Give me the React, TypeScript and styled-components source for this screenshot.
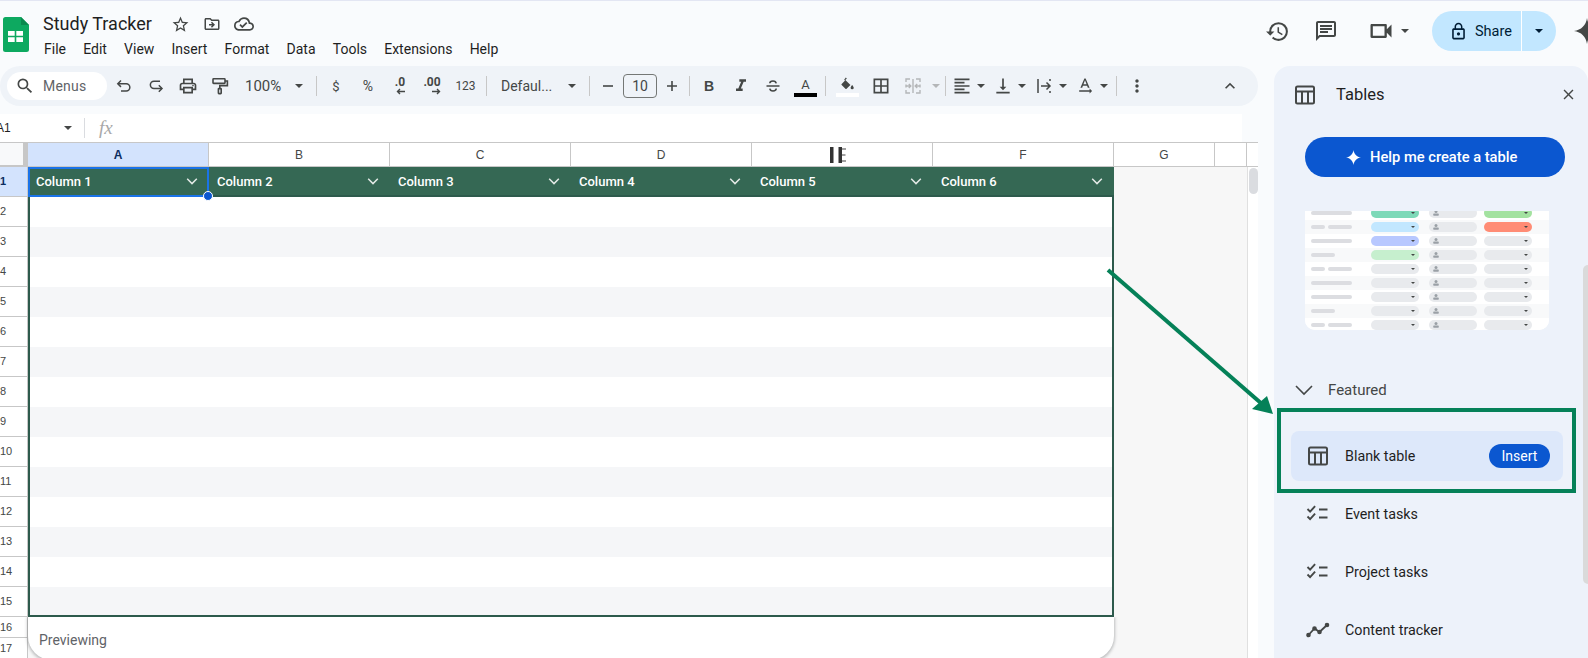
import React from 'react';
import styled, { createGlobalStyle } from 'styled-components';
import {
  MdBorderAll,
  MdClose,
  MdExpandLess,
  MdFormatAlignLeft,
  MdFormatItalic,
  MdHistory,
  MdLockOutline,
  MdMoreVert,
  MdOutlineChat,
  MdOutlineCloudDone,
  MdOutlineDriveFileMove,
  MdOutlinePrint,
  MdOutlineVideocam,
  MdSearch,
  MdStarBorder,
  MdTextRotationNone,
  MdVerticalAlignBottom,
} from 'react-icons/md';

const GlobalStyle = createGlobalStyle`
  html, body {
    margin: 0;
    padding: 0;
    background: #f9fbfd;
  }
  * {
    box-sizing: border-box;
  }
`;

const Page = styled.div`
  position: relative;
  width: 1588px;
  height: 658px;
  overflow: hidden;
  background: #f9fbfd;
  font-family: Roboto, 'Liberation Sans', sans-serif;
  color: #1f1f1f;
  border-top: 1px solid #e3e6f3;
`;

const TitleBar = styled.header`
  display: flex;
  align-items: flex-start;
  height: 65px;
  padding-left: 3px;
`;

const Logo = styled.svg`
  width: 26px;
  height: 35px;
  margin-top: 16px;
  flex: none;
`;

const TitleBlock = styled.div`
  margin-left: 14px;
  padding-top: 11px;
`;

const TitleRow = styled.div`
  display: flex;
  align-items: center;
  height: 24px;
`;

const DocName = styled.div`
  font-size: 18px;
  line-height: 24px;
  width: 121px;
  color: #1f1f1f;
`;

const TitleIcon = styled.span`
  display: flex;
  align-items: center;
  justify-content: center;
  width: 32px;
  color: #444746;
`;

const MenuRow = styled.nav`
  display: flex;
  gap: 17.2px;
  margin-top: 3px;
  margin-left: 1px;
  font-size: 14px;
  line-height: 20px;
  color: #1f1f1f;
`;

const RightGroup = styled.div`
  display: flex;
  align-items: center;
  margin-left: auto;
  margin-top: 10px;
  margin-right: -12px;
  height: 40px;
  color: #444746;
`;

const RoundIcon = styled.span<{ $ml?: number }>`
  display: flex;
  align-items: center;
  justify-content: center;
  width: 40px;
  height: 40px;
  margin-left: ${(p) => p.$ml ?? 0}px;
`;

const VideoGroup = styled.div`
  display: flex;
  align-items: center;
  width: 57px;
  margin-left: 15px;
`;

const Caret = styled.span<{ $w?: number; $color?: string }>`
  display: inline-block;
  flex: none;
  width: 0;
  height: 0;
  border-left: ${(p) => p.$w ?? 4}px solid transparent;
  border-right: ${(p) => p.$w ?? 4}px solid transparent;
  border-top: ${(p) => p.$w ?? 4}px solid ${(p) => p.$color ?? '#444746'};
`;

const ShareButton = styled.div`
  display: flex;
  width: 124px;
  height: 40px;
  margin-left: 14px;
  color: #001d35;
  font-size: 14.5px;
  font-weight: 400;
`;

const ShareMain = styled.div`
  display: flex;
  align-items: center;
  gap: 7px;
  width: 90px;
  padding-left: 17px;
  background: #c2e7ff;
  border-radius: 20px 0 0 20px;
  border-right: 1px solid #fff;
`;

const ShareMore = styled.div`
  display: flex;
  align-items: center;
  justify-content: center;
  flex: 1;
  background: #c2e7ff;
  border-radius: 0 20px 20px 0;
`;

const Spark = styled.svg<{ $size: number; $ml?: number }>`
  flex: none;
  width: ${(p) => p.$size}px;
  height: ${(p) => p.$size}px;
  margin-left: ${(p) => p.$ml ?? 0}px;
`;

const Workspace = styled.div`
  display: flex;
  gap: 16px;
  height: 592px;
`;

const LeftColumn = styled.div`
  display: flex;
  flex-direction: column;
  width: 1258px;
  flex: none;
`;

const Toolbar = styled.div`
  display: flex;
  align-items: center;
  flex: none;
  height: 40px;
  padding-left: 7px;
  background: #eff3f8;
  border-radius: 20px;
  color: #444746;
`;

const SearchPill = styled.div`
  display: flex;
  align-items: center;
  width: 100px;
  height: 28px;
  margin-right: 1px;
  padding-left: 8px;
  gap: 8px;
  background: #fff;
  border-radius: 14px;
  font-size: 14px;
  letter-spacing: 0.2px;
  color: #5f6368;
`;

const Tool = styled.span<{ $w?: number; $size?: number }>`
  display: flex;
  align-items: center;
  justify-content: center;
  flex: none;
  width: ${(p) => p.$w ?? 32}px;
  height: 28px;
  color: #444746;
  font-size: ${(p) => p.$size ?? 14}px;
`;

const CollapseTool = styled(Tool)`
  margin-left: auto;
  margin-right: 12px;
`;

const CaretTool = styled.span`
  display: flex;
  align-items: center;
  flex: none;
  gap: 5px;
  width: 41px;
  height: 28px;
  padding-left: 3px;
`;

const Separator = styled.span`
  flex: none;
  width: 1px;
  height: 20px;
  margin: 0 3px;
  background: #c7c7c7;
`;

const TextSelect = styled.span<{ $w: number; $pl: number; $size?: number }>`
  display: flex;
  align-items: center;
  justify-content: space-between;
  flex: none;
  width: ${(p) => p.$w}px;
  padding: 0 10px 0 ${(p) => p.$pl}px;
  font-size: ${(p) => p.$size ?? 14}px;
  color: #444746;
`;

const FontSizeBox = styled.span`
  display: flex;
  align-items: center;
  justify-content: center;
  flex: none;
  width: 34px;
  height: 24px;
  border: 1px solid #747775;
  border-radius: 4px;
  font-size: 14px;
  color: #444746;
`;

const DecimalMark = styled.span`
  display: flex;
  flex-direction: column;
  align-items: flex-end;
  font-size: 12px;
  font-weight: 700;
  line-height: 11px;
  margin-top: -1px;
`;

const BoldMark = styled.span`
  font-family: 'Liberation Sans', sans-serif;
  font-size: 14px;
  font-weight: 700;
`;

const ColorMark = styled.span`
  display: flex;
  flex-direction: column;
  align-items: center;
  width: 23px;
  font-size: 13px;
  line-height: 15px;
  margin-top: 1px;
`;

const ColorBar = styled.span<{ $color: string }>`
  display: block;
  width: 23px;
  height: 4px;
  margin-top: 1px;
  background: ${(p) => p.$color};
`;

const FormulaBar = styled.div`
  display: flex;
  align-items: center;
  flex: none;
  width: 1242px;
  height: 28px;
  margin-top: 8px;
  background: #fff;
  font-family: 'Liberation Sans', sans-serif;
  font-size: 12px;
  color: #444746;
`;

const NameBox = styled.span`
  display: flex;
  align-items: center;
  justify-content: space-between;
  width: 76px;
  margin-left: -4px;
  color: #1f1f1f;
`;

const FormulaDivider = styled.span`
  width: 1px;
  height: 20px;
  margin-left: 12px;
  background: #dadce0;
`;

const FxMark = styled.span`
  margin-left: 14px;
  font-family: 'Liberation Serif', serif;
  font-style: italic;
  font-size: 19px;
  color: #a8a8a8;
`;

const ColumnHeader = styled.div`
  display: flex;
  flex: none;
  width: 1258px;
  height: 25px;
  background: #fff;
  border-top: 1px solid #c7c7c7;
  border-bottom: 1px solid #c7c7c7;
  font-family: 'Liberation Sans', sans-serif;
  font-size: 12px;
  color: #444746;
`;

const CornerCell = styled.div`
  flex: none;
  width: 28px;
  height: 26px;
  margin-bottom: -2px;
  background: #f8f9fa;
  border-right: 5px solid #c7c7c7;
  border-bottom: 4px solid #c7c7c7;
`;

const ColumnCell = styled.div<{ $w: number; $active?: boolean }>`
  display: flex;
  align-items: center;
  justify-content: center;
  flex: none;
  width: ${(p) => p.$w}px;
  border-right: 1px solid #c7c7c7;
  background: ${(p) => (p.$active ? '#d3e3fd' : '#fff')};
  font-weight: ${(p) => (p.$active ? 700 : 400)};
  color: ${(p) => (p.$active ? '#0b2c5f' : '#444746')};
`;

const SheetBody = styled.div`
  display: flex;
  flex: 1;
  min-height: 0;
`;

const RowHeader = styled.div`
  flex: none;
  width: 28px;
  border-right: 1px solid #c7c7c7;
  background: #fff;
  font-family: 'Liberation Sans', sans-serif;
`;

const RowNumber = styled.div<{ $h: number; $active?: boolean }>`
  display: flex;
  align-items: center;
  width: 100%;
  height: ${(p) => p.$h}px;
  padding-bottom: 1px;
  border-bottom: 1px solid #c7c7c7;
  font-size: 11px;
  background: ${(p) => (p.$active ? '#d3e3fd' : '#fff')};
  font-weight: ${(p) => (p.$active ? 700 : 400)};
  color: ${(p) => (p.$active ? '#0b2c5f' : '#444746')};
`;

const CellArea = styled.div`
  position: relative;
  flex: none;
  width: 1219px;
  background: #f7f7f7;
`;

const DataTable = styled.div`
  display: flex;
  flex-direction: column;
  width: 1086px;
  height: 450px;
  border: 2px solid #2d5a4c;
  border-top: 0;
`;

const HeaderRow = styled.div`
  display: flex;
  flex: none;
  height: 30px;
  margin: 0 -2px;
  background: #356854;
  border-bottom: 2px solid #2d5a4c;
`;

const HeaderCell = styled.div`
  display: flex;
  align-items: center;
  justify-content: space-between;
  flex: none;
  width: 181px;
  padding: 0 11px 0 8px;
  color: #fff;
  font-size: 13px;
  font-weight: 500;
`;

const StripeRow = styled.div<{ $odd: boolean }>`
  flex: none;
  height: 30px;
  background: ${(p) => (p.$odd ? '#f5f6f8' : '#fff')};

  &:last-child {
    height: 28px;
  }
`;

const SelectionBox = styled.div`
  position: absolute;
  left: 0;
  top: 0;
  width: 181px;
  height: 30px;
  border: 2px solid #1a73e8;
`;

const SelectionHandle = styled.span`
  position: absolute;
  right: -6px;
  bottom: -6px;
  width: 10px;
  height: 10px;
  border-radius: 50%;
  background: #0b57d0;
  border: 1px solid #fff;
`;

const PreviewFooter = styled.div`
  width: 1086px;
  height: 43px;
  padding: 13px 0 0 11px;
  background: #fff;
  border-radius: 0 0 24px 24px;
  box-shadow: 0 1px 3px 1px rgba(60, 64, 67, 0.3);
  clip-path: inset(0 -6px -6px -6px);
  font-size: 14px;
  line-height: 20px;
  color: #5f6368;
`;

const ScrollGutter = styled.div`
  flex: none;
  width: 11px;
  padding: 1px 1px;
  background: #fff;
  border-left: 1px solid #e0e0e0;
`;

const ScrollThumb = styled.div`
  width: 9px;
  height: 26px;
  background: #dadce0;
  border-radius: 5px;
`;

const SidePanel = styled.aside`
  position: relative;
  flex: none;
  width: 314px;
  height: 592px;
  overflow: hidden;
  background: #edf2fa;
  border-radius: 16px 16px 0 0;
`;

const PanelHeader = styled.div`
  display: flex;
  align-items: center;
  height: 57px;
  padding-left: 19px;
  color: #444746;
`;

const PanelTitle = styled.div`
  margin-left: 19px;
  font-size: 16.5px;
  color: #1f1f1f;
`;

const PanelClose = styled.span`
  display: flex;
  margin-left: auto;
  margin-right: 11px;
`;

const HelpButton = styled.div`
  display: flex;
  align-items: center;
  gap: 9px;
  width: 260px;
  height: 40px;
  margin: 14px 0 0 31px;
  padding-left: 41px;
  background: #0b57d0;
  border-radius: 20px;
  color: #fff;
  font-size: 14.7px;
  font-weight: 500;
`;

const PreviewImage = styled.div`
  width: 244px;
  height: 119px;
  margin: 34px 0 0 31px;
  overflow: hidden;
  background: #fff;
  border-radius: 0 0 10px 10px;
`;

const PreviewRows = styled.div`
  margin-top: -5px;
`;

const PreviewRow = styled.div<{ $odd: boolean }>`
  display: flex;
  align-items: center;
  height: 14px;
  padding-left: 6px;
  background: ${(p) => (p.$odd ? '#f8f9fa' : '#fff')};
`;

const LabelSlot = styled.div`
  display: flex;
  gap: 3px;
  flex: none;
  width: 60px;
`;

const LabelBar = styled.span<{ $w: number }>`
  display: block;
  width: ${(p) => p.$w}px;
  height: 4px;
  border-radius: 2px;
  background: #dcdde1;
`;

const PreviewPill = styled.span<{ $color?: string; $ml: number }>`
  display: flex;
  align-items: center;
  justify-content: space-between;
  flex: none;
  width: 48px;
  height: 10px;
  margin-left: ${(p) => p.$ml}px;
  padding: 0 4px;
  border-radius: 5px;
  background: ${(p) => p.$color ?? '#e8eaed'};
`;

const PillCaret = styled.span`
  width: 0;
  height: 0;
  margin-left: auto;
  border-left: 2px solid transparent;
  border-right: 2px solid transparent;
  border-top: 2px solid #444746;
`;

const SectionHeader = styled.div`
  display: flex;
  align-items: center;
  height: 24px;
  margin: 48px 0 0 20px;
  gap: 14px;
  font-size: 15px;
  color: #444746;
`;

const TemplateRow = styled.div<{ $active?: boolean; $mt?: number }>`
  display: flex;
  align-items: center;
  width: 272px;
  height: 50px;
  margin: ${(p) => p.$mt ?? 8}px 0 0 17px;
  padding: 0 13px 0 15px;
  border-radius: 8px;
  background: ${(p) => (p.$active ? '#dde8fa' : 'transparent')};
  font-size: 14.3px;
  color: #1f1f1f;
`;

const TemplateName = styled.span`
  margin-left: 15px;
`;

const InsertPill = styled.span`
  display: flex;
  align-items: center;
  justify-content: center;
  width: 61px;
  height: 24px;
  margin-left: auto;
  background: #0b57d0;
  border-radius: 12px;
  color: #fff;
  font-size: 14px;
  font-weight: 400;
`;

const PanelThumb = styled.div`
  position: absolute;
  right: 0;
  top: 199px;
  width: 5px;
  height: 319px;
  background: #dadada;
  border-radius: 5px 0 0 5px;
`;

const Highlight = styled.div`
  position: absolute;
  left: 1277px;
  top: 407px;
  width: 299px;
  height: 85px;
  border: 4px solid #058158;
`;

const ArrowLayer = styled.svg`
  position: absolute;
  left: 0;
  top: -1px;
  width: 1588px;
  height: 658px;
  pointer-events: none;
`;

const CursorWrap = styled.span`
  display: flex;
  margin-right: 8px;
`;

const menus = ['File', 'Edit', 'View', 'Insert', 'Format', 'Data', 'Tools', 'Extensions', 'Help'];
const columns = [
  { label: 'A', width: 181, active: true },
  { label: 'B', width: 181 },
  { label: 'C', width: 181 },
  { label: 'D', width: 181 },
  { label: '', width: 181, cursor: true },
  { label: 'F', width: 181 },
  { label: 'G', width: 101 },
  { label: '', width: 32 },
];
const tableColumns = ['Column 1', 'Column 2', 'Column 3', 'Column 4', 'Column 5', 'Column 6'];
const rowNumbers = Array.from({ length: 17 }, (_, i) => i + 1);
const stripes = Array.from({ length: 14 }, (_, i) => i);

const previewRows = [
  { labels: [41], a: '#7dd9b8', c: '#a3e2a0' },
  { labels: [14, 24], a: '#c2e7ff', c: '#ff8c75' },
  { labels: [41], a: '#b8c8ff' },
  { labels: [24], a: '#c6efce' },
  { labels: [14, 24] },
  { labels: [41] },
  { labels: [41] },
  { labels: [24] },
  { labels: [14, 24] },
];

const TableIcon = ({ size = 24 }: { size?: number }) => (
  <svg width={size} height={size} viewBox="0 0 24 24" fill="none" stroke="#444746" strokeWidth="2">
    <rect x="3" y="3.5" width="18" height="17" rx="1.5" />
    <path d="M3 8.5h18M9 8.5v12M15 8.5v12" />
  </svg>
);

const ChecklistIcon = () => (
  <svg width="24" height="24" viewBox="0 0 24 24" fill="none" stroke="#444746" strokeWidth="1.9">
    <path d="M1.5 7l2.6 2.6 5-5.4M1.5 14.5l2.6 2.6 5-5.4" />
    <path d="M13 7.5h8.5M13 15.5h8.5" strokeWidth="2" />
  </svg>
);

const TrendIcon = () => (
  <svg width="24" height="24" viewBox="0 0 24 24" fill="#444746" stroke="#444746" strokeWidth="1.8">
    <path d="M2.5 17l6-6.5 5 3.5 7.5-7" fill="none" />
    <circle cx="2.5" cy="17" r="1.4" />
    <circle cx="8.5" cy="10.5" r="1.4" />
    <circle cx="13.5" cy="14" r="1.4" />
    <circle cx="21" cy="7" r="1.4" />
  </svg>
);

const SparkIcon = ({ size, color, ml }: { size: number; color: string; ml?: number }) => (
  <Spark $size={size} $ml={ml} viewBox="0 0 24 24">
    <path d="M12 0C12.8 6.6 17.4 11.2 24 12 17.4 12.8 12.8 17.4 12 24 11.2 17.4 6.6 12.8 0 12 6.6 11.2 11.2 6.6 12 0z" fill={color} />
  </Spark>
);

const UndoIcon = () => (
  <svg width="18" height="18" viewBox="0 0 18 18" fill="none" stroke="#444746" strokeWidth="1.5">
    <path d="M6 3.5L2.8 6.7 6 9.9" />
    <path d="M3 6.7h8.2a3.6 3.6 0 0 1 0 7.3H6" />
  </svg>
);

const RedoIcon = () => (
  <svg width="18" height="18" viewBox="0 0 18 18" fill="none" stroke="#444746" strokeWidth="1.5">
    <path d="M13 4.2H7a3.6 3.6 0 0 0 0 7.3h8" />
    <path d="M11.8 8.3l3.2 3.2-3.2 3.2" />
  </svg>
);

const PaintIcon = () => (
  <svg width="20" height="20" viewBox="0 0 20 20" fill="none" stroke="#444746" strokeWidth="1.6">
    <rect x="3" y="2.8" width="12" height="4.6" rx="0.6" />
    <path d="M15 5h2.4v4.6H9.8v3" />
    <rect x="8.4" y="12.6" width="2.8" height="5" rx="0.5" />
  </svg>
);

const StrikeIcon = () => (
  <svg width="18" height="18" viewBox="0 0 18 18" fill="none" stroke="#444746" strokeWidth="1.5">
    <path d="M2.5 9h13" />
    <path d="M12.2 6.4C12 4.9 10.7 4 9 4S5.8 4.9 5.8 6.3" />
    <path d="M5.8 11.6C6 13.1 7.3 14 9 14s3.2-.9 3.2-2.4" />
  </svg>
);

const BucketIcon = () => (
  <svg width="15" height="15" viewBox="0 0 18 18" fill="#444746">
    <path d="M6 0.5L7.2 1.7 5.4 3.5l6.2 6.1-.1.1-4.6 4.5a1 1 0 0 1-1.4 0L1 9.7a1 1 0 0 1 0-1.4L4.2 5 5 4.2 4 3.2z" transform="translate(1 0)" />
    <path d="M14.6 9.5s1.9 2.1 1.9 3.4a1.9 1.9 0 0 1-3.8 0c0-1.3 1.9-3.4 1.9-3.4z" />
  </svg>
);

const DecimalArrow = ({ back }: { back?: boolean }) => (
  <svg width="9" height="7" viewBox="0 0 9 7" fill="none" stroke="#444746" strokeWidth="1.4">
    {back ? <path d="M9 3.5H1.5M4 1L1.5 3.5 4 6" /> : <path d="M0 3.5h7.5M5 1l2.5 2.5L5 6" />}
  </svg>
);

const MergeIcon = () => (
  <svg width="20" height="20" viewBox="0 0 20 20" fill="none" stroke="#b4b6b8" strokeWidth="1.4">
    <path d="M3 6V3h4M13 3h4v3M3 14v3h4M13 17h4v-3M3 8.5v3M17 8.5v3" />
    <path d="M3 10h4.5M5.8 8l2 2-2 2M17 10h-4.5M14.2 8l-2 2 2 2M10 3v14" />
  </svg>
);

const WrapIcon = () => (
  <svg width="20" height="20" viewBox="0 0 20 20" fill="none" stroke="#444746" strokeWidth="1.5">
    <path d="M4 3v14M7 10h9M12.5 6.5L16 10l-3.5 3.5M16 3v2M16 15v2" />
  </svg>
);

const ResizeCursor = () => (
  <svg width="22" height="18" viewBox="0 0 22 18">
    <rect x="3" y="1" width="3.5" height="16" fill="#333" />
    <rect x="11.5" y="1" width="3.5" height="16" fill="#333" />
    <path d="M15 3h4M15 9h3.5M15 15h4" stroke="#444" strokeWidth="1.2" />
  </svg>
);

const HeaderChevron = () => (
  <svg width="12" height="12" viewBox="0 0 12 12" fill="none" stroke="#e3e9e6" strokeWidth="1.5">
    <path d="M1.2 3.8L6 8.6l4.8-4.8" />
  </svg>
);

const SectionChevron = () => (
  <svg width="20" height="20" viewBox="0 0 20 20" fill="none" stroke="#444746" strokeWidth="1.6">
    <path d="M2 6l8 8 8-8" />
  </svg>
);

const PersonGlyph = () => (
  <svg width="6" height="6" viewBox="0 0 6 6" fill="#9aa0a6">
    <circle cx="3" cy="1.6" r="1.5" />
    <rect x="0.2" y="3.6" width="5.6" height="2.2" rx="0.8" />
  </svg>
);

export default function App() {
  return (
    <Page>
      <GlobalStyle />
      <TitleBar>
        <Logo viewBox="0 0 26 35">
          <path d="M2.5 0H18l8 8v24.5a2.5 2.5 0 0 1-2.5 2.5h-21A2.5 2.5 0 0 1 0 32.5v-30A2.5 2.5 0 0 1 2.5 0z" fill="#0da960" />
          <path d="M18 0l8 8h-8z" fill="#0a8a4e" />
          <rect x="5" y="14" width="15" height="11" fill="#fff" />
          <path d="M12.5 14v11M5 19.5h15" stroke="#0da960" strokeWidth="1.6" />
        </Logo>
        <TitleBlock>
          <TitleRow>
            <DocName>Study Tracker</DocName>
            <TitleIcon>
              <MdStarBorder size={19} />
            </TitleIcon>
            <TitleIcon>
              <MdOutlineDriveFileMove size={18} />
            </TitleIcon>
            <TitleIcon>
              <MdOutlineCloudDone size={20} />
            </TitleIcon>
          </TitleRow>
          <MenuRow>
            {menus.map((menu) => (
              <span key={menu}>{menu}</span>
            ))}
          </MenuRow>
        </TitleBlock>
        <RightGroup>
          <RoundIcon>
            <MdHistory size={25} />
          </RoundIcon>
          <RoundIcon $ml={9}>
            <MdOutlineChat size={24} />
          </RoundIcon>
          <VideoGroup>
            <RoundIcon>
              <MdOutlineVideocam size={28} />
            </RoundIcon>
            <Caret />
          </VideoGroup>
          <ShareButton>
            <ShareMain>
              <MdLockOutline size={19} />
              Share
            </ShareMain>
            <ShareMore>
              <Caret $color="#001d35" />
            </ShareMore>
          </ShareButton>
          <SparkIcon size={26} color="#444746" ml={18} />
        </RightGroup>
      </TitleBar>

      <Workspace>
        <LeftColumn>
          <Toolbar>
            <SearchPill>
              <MdSearch size={20} color="#444746" />
              Menus
            </SearchPill>
            <Tool><UndoIcon /></Tool>
            <Tool><RedoIcon /></Tool>
            <Tool><MdOutlinePrint size={20} /></Tool>
            <Tool><PaintIcon /></Tool>
            <TextSelect $w={77} $pl={9} $size={15}>
              100%
              <Caret />
            </TextSelect>
            <Separator />
            <Tool $size={13}>$</Tool>
            <Tool>%</Tool>
            <Tool>
              <DecimalMark>
                .0
                <DecimalArrow back />
              </DecimalMark>
            </Tool>
            <Tool>
              <DecimalMark>
                .00
                <DecimalArrow />
              </DecimalMark>
            </Tool>
            <Tool $w={35} $size={12}>123</Tool>
            <Separator />
            <TextSelect $w={96} $pl={11}>
              Defaul...
              <Caret />
            </TextSelect>
            <Separator />
            <Tool $w={30}>
              <svg width="14" height="14" viewBox="0 0 14 14" stroke="#444746" strokeWidth="1.6">
                <path d="M2 7h10" />
              </svg>
            </Tool>
            <FontSizeBox>10</FontSizeBox>
            <Tool $w={29}>
              <svg width="14" height="14" viewBox="0 0 14 14" stroke="#444746" strokeWidth="1.6">
                <path d="M2 7h10M7 2v10" />
              </svg>
            </Tool>
            <Separator />
            <Tool><BoldMark>B</BoldMark></Tool>
            <Tool><MdFormatItalic size={20} /></Tool>
            <Tool><StrikeIcon /></Tool>
            <Tool $w={33}>
              <ColorMark>
                A
                <ColorBar $color="#000" />
              </ColorMark>
            </Tool>
            <Separator />
            <Tool $w={36}>
              <ColorMark>
                <BucketIcon />
                <ColorBar $color="#fff" />
              </ColorMark>
            </Tool>
            <Tool><MdBorderAll size={20} /></Tool>
            <Tool><MergeIcon /></Tool>
            <Tool $w={13}><Caret $color="#b4b6b8" /></Tool>
            <Separator />
            <CaretTool>
              <MdFormatAlignLeft size={20} />
              <Caret />
            </CaretTool>
            <CaretTool>
              <MdVerticalAlignBottom size={20} />
              <Caret />
            </CaretTool>
            <CaretTool>
              <WrapIcon />
              <Caret />
            </CaretTool>
            <CaretTool>
              <MdTextRotationNone size={20} />
              <Caret />
            </CaretTool>
            <Separator />
            <Tool $w={33}><MdMoreVert size={20} /></Tool>
            <CollapseTool><MdExpandLess size={20} /></CollapseTool>
          </Toolbar>

          <FormulaBar>
            <NameBox>
              A1
              <Caret />
            </NameBox>
            <FormulaDivider />
            <FxMark>fx</FxMark>
          </FormulaBar>

          <ColumnHeader>
            <CornerCell />
            {columns.map((col, i) => (
              <ColumnCell key={i} $w={col.width} $active={col.active}>
                {col.cursor ? (
                  <CursorWrap>
                    <ResizeCursor />
                  </CursorWrap>
                ) : (
                  col.label
                )}
              </ColumnCell>
            ))}
          </ColumnHeader>

          <SheetBody>
            <RowHeader>
              {rowNumbers.map((n) => (
                <RowNumber key={n} $h={n > 15 ? 21 : 30} $active={n === 1}>
                  {n}
                </RowNumber>
              ))}
            </RowHeader>
            <CellArea>
              <DataTable>
                <HeaderRow>
                  {tableColumns.map((name) => (
                    <HeaderCell key={name}>
                      {name}
                      <HeaderChevron />
                    </HeaderCell>
                  ))}
                </HeaderRow>
                {stripes.map((i) => (
                  <StripeRow key={i} $odd={i % 2 === 1} />
                ))}
              </DataTable>
              <PreviewFooter>Previewing</PreviewFooter>
              <SelectionBox>
                <SelectionHandle />
              </SelectionBox>
            </CellArea>
            <ScrollGutter>
              <ScrollThumb />
            </ScrollGutter>
          </SheetBody>
        </LeftColumn>

        <SidePanel>
          <PanelHeader>
            <TableIcon size={24} />
            <PanelTitle>Tables</PanelTitle>
            <PanelClose>
              <MdClose size={17} />
            </PanelClose>
          </PanelHeader>
          <HelpButton>
            <SparkIcon size={15} color="#fff" />
            Help me create a table
          </HelpButton>
          <PreviewImage>
            <PreviewRows>
              {previewRows.map((row, i) => (
                <PreviewRow key={i} $odd={i % 2 === 1}>
                  <LabelSlot>
                    {row.labels.map((w, j) => (
                      <LabelBar key={j} $w={w} />
                    ))}
                  </LabelSlot>
                  <PreviewPill $ml={0} $color={row.a}>
                    <PillCaret />
                  </PreviewPill>
                  <PreviewPill $ml={10}>
                    <PersonGlyph />
                  </PreviewPill>
                  <PreviewPill $ml={7} $color={row.c}>
                    <PillCaret />
                  </PreviewPill>
                </PreviewRow>
              ))}
            </PreviewRows>
          </PreviewImage>
          <SectionHeader>
            <SectionChevron />
            Featured
          </SectionHeader>
          <TemplateRow $active $mt={29}>
            <TableIcon size={24} />
            <TemplateName>Blank table</TemplateName>
            <InsertPill>Insert</InsertPill>
          </TemplateRow>
          <TemplateRow>
            <ChecklistIcon />
            <TemplateName>Event tasks</TemplateName>
          </TemplateRow>
          <TemplateRow>
            <ChecklistIcon />
            <TemplateName>Project tasks</TemplateName>
          </TemplateRow>
          <TemplateRow>
            <TrendIcon />
            <TemplateName>Content tracker</TemplateName>
          </TemplateRow>
          <PanelThumb />
        </SidePanel>
      </Workspace>

      <Highlight />
      <ArrowLayer viewBox="0 0 1588 658">
        <path d="M1108 270L1262 404" stroke="#058158" strokeWidth="4" fill="none" />
        <path d="M1273 414L1252 409 1267 396z" fill="#058158" />
      </ArrowLayer>
    </Page>
  );
}
